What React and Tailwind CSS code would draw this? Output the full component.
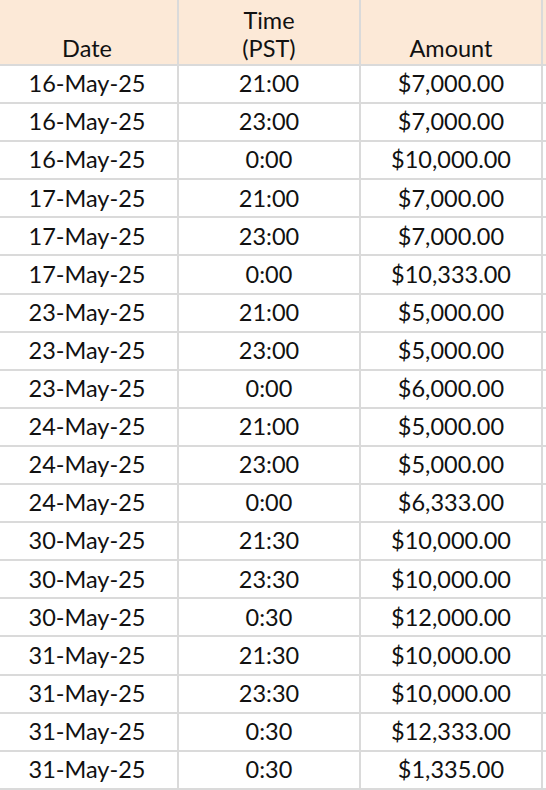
import React from "react";

const rows = [
  ["16-May-25", "21:00", "$7,000.00"],
  ["16-May-25", "23:00", "$7,000.00"],
  ["16-May-25", "0:00", "$10,000.00"],
  ["17-May-25", "21:00", "$7,000.00"],
  ["17-May-25", "23:00", "$7,000.00"],
  ["17-May-25", "0:00", "$10,333.00"],
  ["23-May-25", "21:00", "$5,000.00"],
  ["23-May-25", "23:00", "$5,000.00"],
  ["23-May-25", "0:00", "$6,000.00"],
  ["24-May-25", "21:00", "$5,000.00"],
  ["24-May-25", "23:00", "$5,000.00"],
  ["24-May-25", "0:00", "$6,333.00"],
  ["30-May-25", "21:30", "$10,000.00"],
  ["30-May-25", "23:30", "$10,000.00"],
  ["30-May-25", "0:30", "$12,000.00"],
  ["31-May-25", "21:30", "$10,000.00"],
  ["31-May-25", "23:30", "$10,000.00"],
  ["31-May-25", "0:30", "$12,333.00"],
  ["31-May-25", "0:30", "$1,335.00"],
];

export default function App() {
  return (
    <div className="w-[546px] h-[790px] overflow-hidden bg-white font-['Lato',sans-serif] text-[23.5px] text-[#111]">
      <div className="ml-[-3px] w-[560px]">
        <div className="flex h-[66px] bg-[#fce9d7] border-b-2 border-[#dadada]">
          <div className="w-[182px] border-r-2 border-[#dadada] flex items-end justify-center pb-[2px] leading-[28px]">Date</div>
          <div className="w-[182px] border-r-2 border-[#dadada] flex items-end justify-center pb-[2px] leading-[28px] text-center">
            Time
            <br />
            (PST)
          </div>
          <div className="w-[182px] border-r-2 border-[#dadada] flex items-end justify-center pb-[2px] leading-[28px]">Amount</div>
        </div>
        {rows.map((r, i) => (
          <div key={i} className="flex h-[38.1px] border-b-2 border-[#dadada]">
            {r.map((c, j) => (
              <div key={j} className="w-[182px] border-r-2 border-[#dadada] flex items-center justify-center leading-none">
                {c}
              </div>
            ))}
          </div>
        ))}
      </div>
    </div>
  );
}
